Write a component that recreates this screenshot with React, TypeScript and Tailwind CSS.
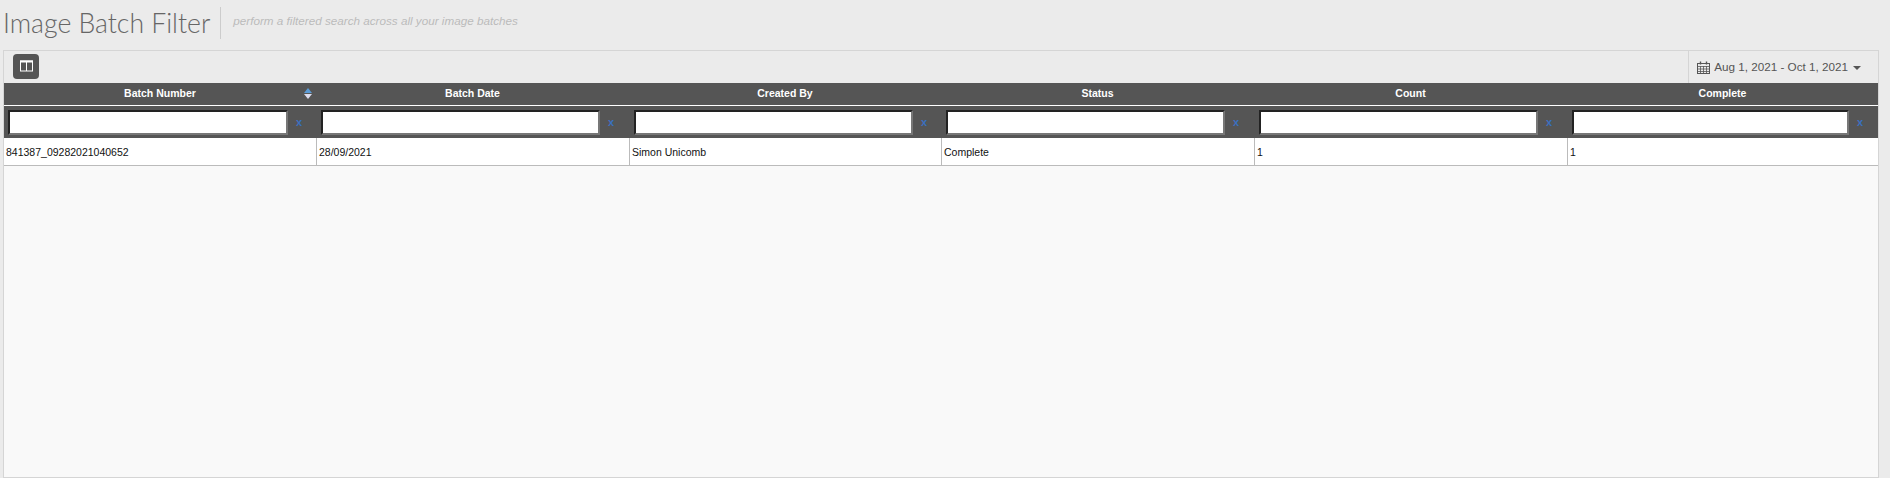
const columns = ["Batch Number", "Batch Date", "Created By", "Status", "Count", "Complete"];
const row = ["841387_09282021040652", "28/09/2021", "Simon Unicomb", "Complete", "1", "1"];
const gridCols = "grid grid-cols-[312px_313px_312px_313px_313px_311px]";

function FilterCell({ index }: { index: number }) {
    const first = index === 0;
    const last = index === 5;
    return (
        <div className={`flex h-[32px] items-center ${first ? "pl-[4px]" : "pl-[5px]"}`}>
            <div className={`h-[25px] ${first ? "w-[280px]" : last ? "w-[277px]" : "w-[279px]"} border-2 border-t-[#222] border-l-[#222] border-r-[#777] border-b-[#777] bg-white`} />
            <span className="ml-[8px] text-[11px] font-bold leading-none text-[#3a70c0]">x</span>
        </div>
    );
}

function CalendarIcon() {
    return (
        <svg width="13" height="13" viewBox="0 0 13 13" className="mr-[4px]" fill="none" stroke="#555">
            <rect x="0.5" y="2.5" width="12" height="10" />
            <path d="M0.5 5.5h12M0.5 8h12M0.5 10.5h12M3.5 5v7.5M6.5 5v7.5M9.5 5v7.5" strokeWidth="0.8" />
            <path d="M3.5 0.5v3M9.5 0.5v3" strokeWidth="1.4" />
        </svg>
    );
}

export default function App() {
    return (
        <div className="h-[478px] overflow-hidden bg-[#ebebeb] font-['Liberation_Sans',sans-serif]">
            <div className="flex h-[50px] items-start pl-[3px] pt-[7px]">
                <h1 className="font-['Lato',sans-serif] text-[26.6px] font-light leading-[32px] text-[#666]">Image Batch Filter</h1>
                <div className="ml-[10px] h-[32px] border-l border-[#ccc]" />
                <p className="ml-[12px] pt-[6px] text-[11.7px] italic leading-[16px] text-[#bbb]">perform a filtered search across all your image batches</p>
            </div>
            <div className="ml-[3px] h-[428px] w-[1876px] border border-[#d5d5d5] bg-[#f9f9f9]">
                <div className="flex h-[32px] items-center justify-between bg-[#ebebeb]">
                    <button className="mb-[2px] ml-[9px] flex h-[25px] w-[26px] items-center justify-center rounded-[4px] bg-[#555]">
                        <svg width="13" height="12" viewBox="0 0 13 12">
                            <rect x="0.5" y="1" width="12" height="10" fill="#555" stroke="#fff" />
                            <rect x="0" y="0.5" width="13" height="2" fill="#fff" />
                            <rect x="6" y="1" width="1" height="10" fill="#fff" />
                        </svg>
                    </button>
                    <div className="flex h-[32px] items-center border-l border-[#d5d5d5] pl-[8px] pr-[17px] text-[#555]">
                        <CalendarIcon />
                        <span className="text-[11.7px]">Aug 1, 2021 - Oct 1, 2021</span>
                        <span className="ml-[5px] mt-[1px] border-x-[4px] border-t-[4px] border-x-transparent border-t-[#555]" />
                    </div>
                </div>
                <div className={`${gridCols} h-[23px] border-b border-white bg-[#555] text-[10.5px] font-bold text-white`}>
                    {columns.map((c, i) => (
                        <div key={c} className="relative flex items-center justify-center pb-[1px]">
                            {c}
                            {i === 0 && (
                                <span className="absolute right-[4px] top-[5px] flex flex-col gap-[1px]">
                                    <span className="border-x-[4px] border-b-[5px] border-x-transparent border-b-[#5b9bd5]" />
                                    <span className="border-x-[4px] border-t-[5px] border-x-transparent border-t-[#dde]" />
                                </span>
                            )}
                        </div>
                    ))}
                </div>
                <div className={`${gridCols} bg-[#555]`}>
                    {columns.map((c, i) => <FilterCell key={c} index={i} />)}
                </div>
                <div className={`${gridCols} h-[28px] border-b border-[#bbb] bg-white text-[10.5px] text-[#111]`}>
                    {row.map((v, i) => (
                        <div key={i} className={`flex items-center pl-[2px] pt-[3px] ${i > 0 ? "border-l border-[#bbb]" : ""}`}>{v}</div>
                    ))}
                </div>
            </div>
        </div>
    );
}
